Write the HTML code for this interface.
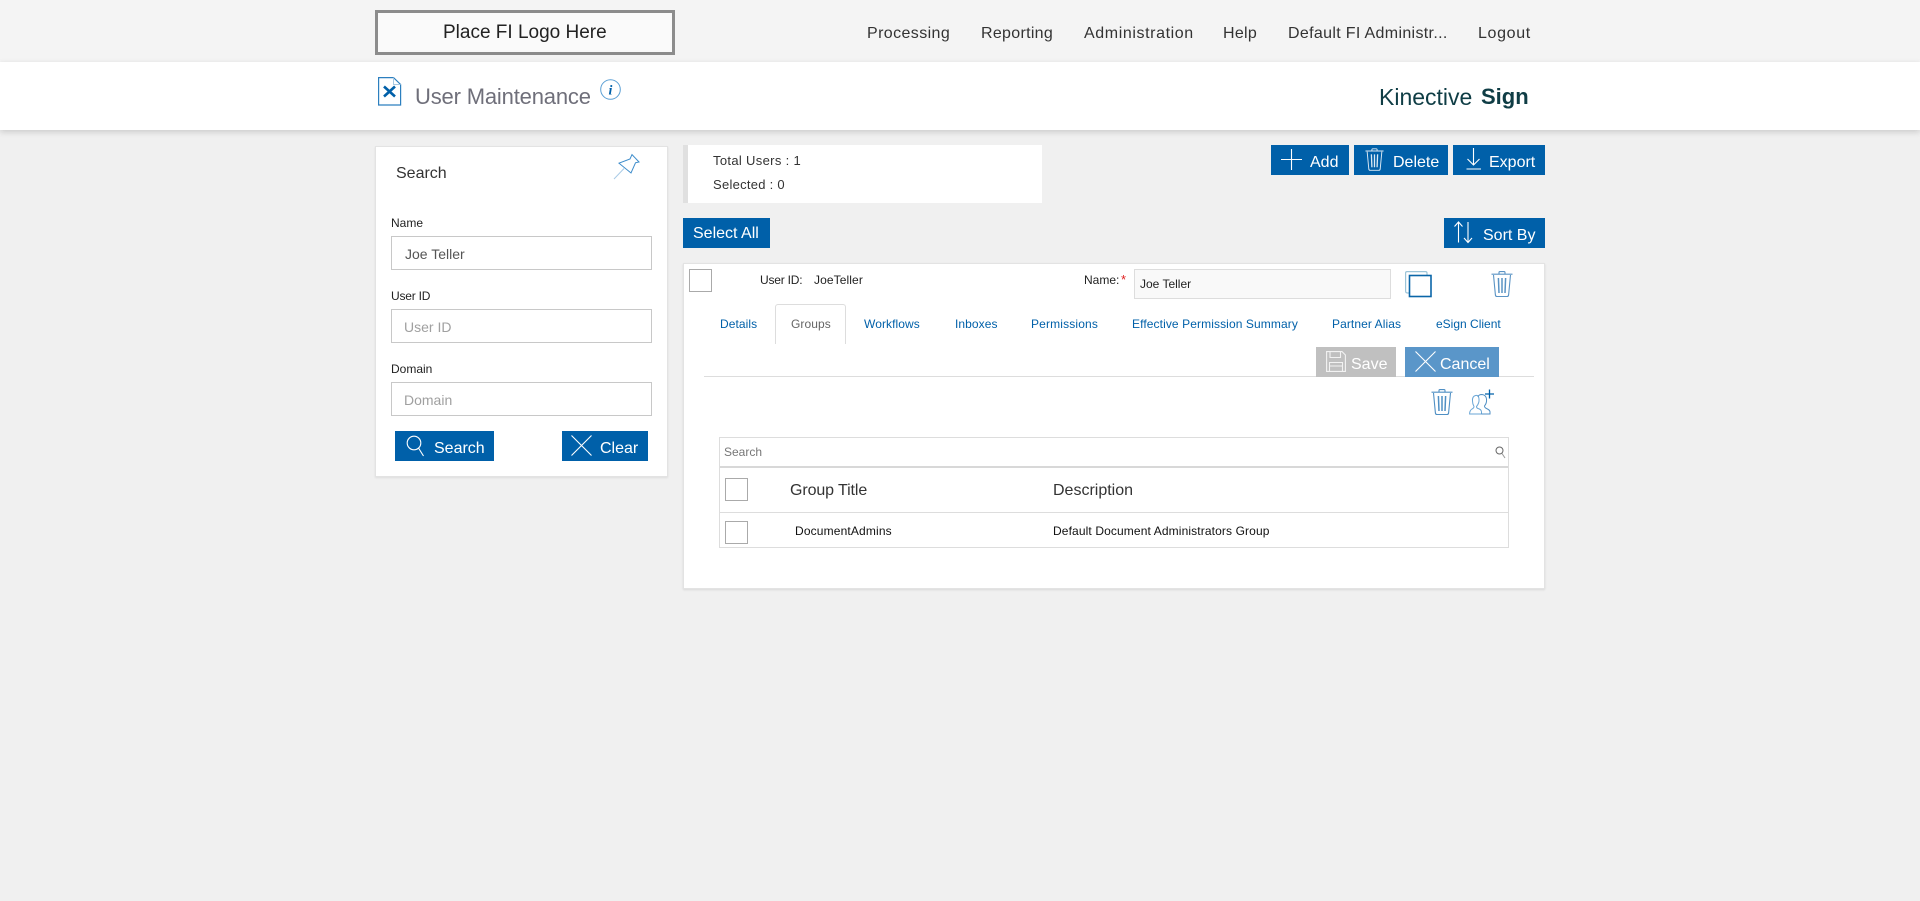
<!DOCTYPE html>
<html lang="en"><head><meta charset="utf-8"><title>User Maintenance</title>
<style>
html,body{margin:0;padding:0;width:1920px;height:901px;overflow:hidden;background:#f0f0f0;font-family:"Liberation Sans",Arial,sans-serif;color:#222}
.a{position:absolute;box-sizing:border-box}
.t{position:absolute;white-space:nowrap;line-height:20px}
.nav{font-size:16px;color:#333;top:24px}
.lab{font-size:12px;color:#222}
.inp{position:absolute;box-sizing:border-box;background:#fff;border:1px solid #c8c8c8;left:391px;width:261px;height:34px}
.ph{font-size:14px;color:#a0a0a0}
.btn{position:absolute;background:#0060a9;height:30px}
.bt{font-size:16px;color:#fff}
.tab{font-size:12px;color:#0060a9;top:314px;letter-spacing:.08px}
.cb{position:absolute;box-sizing:border-box;width:23px;height:23px;background:#fff;border:1px solid #aaa}
svg{position:absolute;overflow:visible}
</style></head><body>
<svg width="0" height="0" style="position:absolute"><defs>
<g id="trash" fill="none" stroke-width="1.1">
<path d="M8 3V1.6Q8 .6 9 .6H13Q14 .6 14 1.6V3"/>
<path d="M.5 3.2H21.5"/>
<path d="M2.5 4L4.4 24Q4.6 25.5 6 25.5H16Q17.4 25.5 17.6 24L19.5 4"/>
<path d="M7.4 7L8 22M11 7V22M14.6 7L14 22" stroke-width="1.5"/>
</g></defs></svg>

<div class="a" style="left:0;top:0;width:1920px;height:62px;background:#f4f4f4"></div>
<div class="a" style="left:375px;top:10px;width:300px;height:45px;border:3px solid #8c8c8c;background:#fafafa"></div>
<span class="t" style="left:443px;top:23px;font-size:19px;color:#222">Place FI Logo Here</span>
<span class="t nav" style="left:867px;letter-spacing:.4px">Processing</span>
<span class="t nav" style="left:981px;letter-spacing:.3px">Reporting</span>
<span class="t nav" style="left:1084px;letter-spacing:.6px">Administration</span>
<span class="t nav" style="left:1223px;letter-spacing:.3px">Help</span>
<span class="t nav" style="left:1288px;letter-spacing:.33px">Default FI Administr...</span>
<span class="t nav" style="left:1478px;letter-spacing:.65px">Logout</span>

<div class="a" style="left:0;top:62px;width:1920px;height:68px;background:#fff;box-shadow:0 2px 6px rgba(0,0,0,.16)"></div>
<svg style="left:378px;top:77px" width="24" height="29" viewBox="0 0 24 29" fill="none">
<path d="M.6.6H15.5L22.6 7.5V28H.6Z" stroke="#2c7fbf" stroke-width="1.2"/>
<path d="M15.5.6V7.5H22.6" stroke="#a9c9e2" stroke-width="1"/>
<path d="M6 9.500L17 19.500M17 9.500L6 19.500" stroke="#0060a9" stroke-width="2.600"/>
</svg>
<span class="t" style="left:415px;top:86px;font-size:22px;line-height:22px;color:#6f6f7a;letter-spacing:-.17px">User Maintenance</span>
<svg style="left:600px;top:79px" width="21" height="21" viewBox="0 0 21 21">
<circle cx="10.5" cy="10.5" r="9.8" fill="none" stroke="#5a9fd4" stroke-width="1"/>
<text x="10.5" y="15.5" text-anchor="middle" font-family="Liberation Serif,serif" font-style="italic" font-weight="700" font-size="14" fill="#0060a9">i</text>
</svg>
<span class="t" style="left:1379px;top:87px;font-size:23px;color:#0f3d45">Kinective</span>
<span class="t" style="left:1481px;top:87px;font-size:22px;font-weight:700;color:#0f3d45">Sign</span>

<!-- Search panel -->
<div class="a" style="left:375px;top:146px;width:293px;height:331px;background:#fff;border:1px solid #e3e3e3;box-shadow:0 1px 2px rgba(0,0,0,.08)"></div>
<span class="t" style="left:396px;top:164px;font-size:16px;color:#333">Search</span>
<svg style="left:614px;top:154px" width="26" height="25" viewBox="0 0 26 25" fill="none">
<path d="M18 .6L25 8L21.5 8.8L17 19L5 9.2L16 5Z" stroke="#3d8ccb" stroke-width="1"/>
<path d="M0 25L10 14.5" stroke="#a9cbe6" stroke-width="1"/>
</svg>
<span class="t lab" style="left:391px;top:213px">Name</span>
<div class="inp" style="top:236px"></div>
<span class="t" style="left:405px;top:244px;font-size:14px;color:#555">Joe Teller</span>
<span class="t lab" style="left:391px;top:286px;letter-spacing:-.2px">User ID</span>
<div class="inp" style="top:309px"></div>
<span class="t ph" style="left:404px;top:317px">User ID</span>
<span class="t lab" style="left:391px;top:359px">Domain</span>
<div class="inp" style="top:382px"></div>
<span class="t ph" style="left:404px;top:390px">Domain</span>

<div class="btn" style="left:395px;top:431px;width:99px"></div>
<svg style="left:406px;top:435px" width="20" height="22" viewBox="0 0 20 22" fill="none" stroke="#fff" stroke-width="1.1">
<circle cx="8" cy="8" r="6.8"/><path d="M12.5 13L17.5 21"/></svg>
<span class="t bt" style="left:434px;top:439px">Search</span>
<div class="btn" style="left:562px;top:431px;width:86px"></div>
<svg style="left:571px;top:435px" width="21" height="21" viewBox="0 0 21 21" fill="none" stroke="#fff" stroke-width="1.1"><path d="M.5.5L20.5 20.5M20.5.5L.5 20.5"/></svg>
<span class="t bt" style="left:600px;top:439px">Clear</span>

<!-- Stats -->
<div class="a" style="left:683px;top:145px;width:359px;height:58px;background:#fff;border-left:5px solid #e0e0e0"></div>
<span class="t" style="left:713px;top:151px;font-size:13px;color:#333;letter-spacing:.33px">Total Users : 1</span>
<span class="t" style="left:713px;top:175px;font-size:13px;color:#333;letter-spacing:.27px">Selected : 0</span>

<!-- Top buttons -->
<div class="btn" style="left:1271px;top:145px;width:78px"></div>
<svg style="left:1281px;top:149px" width="21" height="21" viewBox="0 0 21 21" stroke="#fff" stroke-width="1.1"><path d="M0 10.5H21M10.5 0V21"/></svg>
<span class="t bt" style="left:1310px;top:153px">Add</span>
<div class="btn" style="left:1354px;top:145px;width:94px"></div>
<svg style="left:1365px;top:148px;stroke:#dbe9f4" width="19" height="23" viewBox="0 0 22 26"><use href="#trash"/></svg>
<span class="t bt" style="left:1393px;top:153px">Delete</span>
<div class="btn" style="left:1453px;top:145px;width:92px"></div>
<svg style="left:1466px;top:148px" width="16" height="22" viewBox="0 0 16 22" fill="none" stroke="#fff" stroke-width="1.1"><path d="M7.5 0V17M1.5 11L7.5 17L13.5 11M.5 21H15"/></svg>
<span class="t bt" style="left:1489px;top:153px">Export</span>
<div class="btn" style="left:683px;top:218px;width:87px"></div>
<span class="t bt" style="left:693px;top:224px">Select All</span>
<div class="btn" style="left:1444px;top:218px;width:101px"></div>
<svg style="left:1454px;top:221px" width="20" height="22" viewBox="0 0 20 22" fill="none" stroke="#fff" stroke-width="1.1"><path d="M4.5 21.5V1M.5 5.5L4.5 1L8.5 5.5M14 1V21.5M10 17L14 21.5L18 17"/></svg>
<span class="t bt" style="left:1483px;top:226px">Sort By</span>

<!-- Card -->
<div class="a" style="left:683px;top:263px;width:862px;height:326px;background:#fff;border:1px solid #e3e3e3;box-shadow:0 1px 2px rgba(0,0,0,.1)"></div>
<div class="cb" style="left:689px;top:269px"></div>
<span class="t lab" style="left:760px;top:270px;letter-spacing:-.2px">User ID:</span>
<span class="t lab" style="left:814px;top:270px;letter-spacing:.1px">JoeTeller</span>
<span class="t lab" style="left:1084px;top:270px">Name:</span>
<span class="t lab" style="left:1121px;top:270px;color:#e02020;font-size:13px">*</span>
<div class="a" style="left:1134px;top:269px;width:257px;height:30px;background:#f9f9f9;border:1px solid #ddd"></div>
<span class="t lab" style="left:1140px;top:274px;color:#222">Joe Teller</span>
<svg style="left:1405px;top:271px" width="27" height="27" viewBox="0 0 27 27" fill="none">
<path d="M22 4V2Q22 .6 20.500 .6H2Q.6 .6 .6 2V20Q.6 22 2.500 22H4" stroke="#9cc4d8" stroke-width="1.2"/>
<rect x="4.500" y="4.500" width="21.500" height="21" stroke="#0a66a8" stroke-width="1.6"/></svg>
<svg style="left:1491px;top:271px;stroke:#5a93c4" width="22" height="26" viewBox="0 0 22 26"><use href="#trash"/></svg>

<!-- Tabs -->
<div class="a" style="left:775px;top:304px;width:71px;height:40px;background:#fff;border:1px solid #ddd;border-bottom:0;border-radius:3px 3px 0 0"></div>
<span class="t tab" style="left:720px">Details</span>
<span class="t tab" style="left:791px;color:#666">Groups</span>
<span class="t tab" style="left:864px">Workflows</span>
<span class="t tab" style="left:955px">Inboxes</span>
<span class="t tab" style="left:1031px;letter-spacing:.15px">Permissions</span>
<span class="t tab" style="left:1132px;letter-spacing:.1px">Effective Permission Summary</span>
<span class="t tab" style="left:1332px">Partner Alias</span>
<span class="t tab" style="left:1436px;letter-spacing:0">eSign Client</span>
<div class="a" style="left:704px;top:376px;width:830px;height:1px;background:#ddd"></div>

<div class="btn" style="left:1316px;top:347px;width:80px;background:#c0c0c0"></div>
<svg style="left:1326px;top:351px" width="20" height="21" viewBox="0 0 20 21" fill="none" stroke="#f2f2f2" stroke-width="1.100"><path d="M.6.6H16L19.400 4V20.400H.6Z"/><path d="M4 .6V6.500H14.500V.6M3.500 20.400V11.500H16.500V20.400M3.500 15H16.500"/></svg>
<span class="t bt" style="left:1351px;top:355px;color:#fff">Save</span>
<div class="btn" style="left:1405px;top:347px;width:94px;background:#5a96c9"></div>
<svg style="left:1415px;top:351px" width="21" height="21" viewBox="0 0 21 21" fill="none" stroke="#fff" stroke-width="1.1"><path d="M.5.5L20.500 20.500M20.500.5L.5 20.500"/></svg>
<span class="t bt" style="left:1440px;top:355px">Cancel</span>

<svg style="left:1431px;top:389px;stroke:#4f8fc4" width="22" height="26" viewBox="0 0 22 26"><use href="#trash"/></svg>
<svg style="left:1469px;top:389px" width="26" height="26" viewBox="0 0 26 26" fill="none">
<path d="M.6 25H12.500V23Q12.500 20.500 9 19.500Q7.500 19 7.500 17.500Q10.500 14 10 10Q9.500 5.500 6.500 6.500Q3 7.500 3.500 12Q3.500 15 5 17.500Q5 19 3 20Q.6 21.500.6 25Z" stroke="#6aa6d6" stroke-width="1"/>
<path d="M12.500 25H21V23Q21 21 17.500 19.500Q15.500 18.500 15.500 17Q18 14 17.500 10Q17 6 13 5.500Q9.500 5.500 9 8" stroke="#4f8fc4" stroke-width="1"/>
<path d="M20.500 .5V9.500M16 5H25" stroke="#0060a9" stroke-width="1.300"/></svg>

<!-- Group grid -->
<div class="a" style="left:719px;top:437px;width:790px;height:111px;border:1px solid #ddd;background:#fff"></div>
<div class="a" style="left:720px;top:466px;width:788px;height:2px;background:#d8d8d8"></div>
<span class="t" style="left:724px;top:442px;font-size:12px;color:#777">Search</span>
<svg style="left:1495px;top:446px" width="11" height="13" viewBox="0 0 11 13" fill="none"><circle cx="4.500" cy="4.500" r="3.500" stroke="#666" stroke-width="1"/><path d="M7 7.500L10 12" stroke="#999" stroke-width="1"/></svg>
<div class="cb" style="left:725px;top:478px"></div>
<span class="t" style="left:790px;top:481px;font-size:16px;color:#333;letter-spacing:-.1px">Group Title</span>
<span class="t" style="left:1053px;top:481px;font-size:16px;color:#333">Description</span>
<div class="a" style="left:720px;top:512px;width:788px;height:1px;background:#ddd"></div>
<div class="cb" style="left:725px;top:521px"></div>
<span class="t lab" style="left:795px;top:521px;letter-spacing:.15px;color:#111">DocumentAdmins</span>
<span class="t lab" style="left:1053px;top:521px;letter-spacing:.12px;color:#111">Default Document Administrators Group</span>
</body></html>
